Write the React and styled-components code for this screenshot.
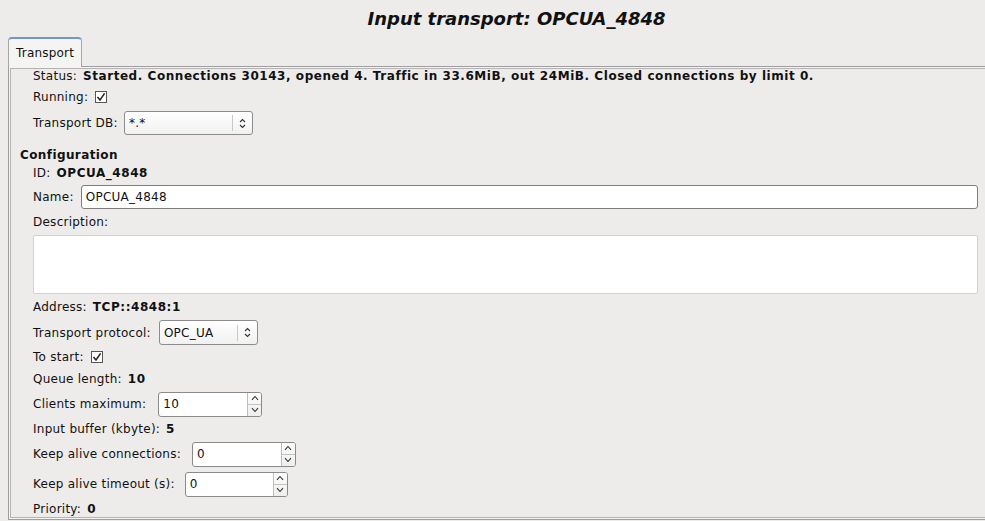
import React from "react";
import styled, { createGlobalStyle } from "styled-components";

const Global = createGlobalStyle`
  html, body { margin: 0; padding: 0; background: #edeceb; overflow: hidden; }
  body { font-family: "DejaVu Sans", "Liberation Sans", sans-serif; font-size: 12px; color: #111; letter-spacing: 0.25px; }
`;

const Window = styled.div`
  width: 1033px;
  height: 521px;
  display: flex;
  flex-direction: column;
`;

const Title = styled.h1`
  margin: 0;
  height: 37px;
  flex-shrink: 0;
  display: flex;
  align-items: center;
  justify-content: center;
  font-size: 18px;
  font-weight: bold;
  font-style: italic;
  letter-spacing: 0;
  color: #111;
`;

const TabBar = styled.div`
  display: flex;
  flex-shrink: 0;
  padding-left: 8px;
  height: 29px;
`;

const Tab = styled.div`
  width: 74px;
  box-sizing: border-box;
  border: 1px solid #a6a6a6;
  border-top: 2px solid #6e98cf;
  border-bottom: none;
  border-radius: 4px 4px 0 0;
  background: #f4f4f2;
  display: flex;
  align-items: center;
  padding-left: 7px;
  font-size: 12px;
  letter-spacing: 0.2px;
  color: #111;
  position: relative;
  z-index: 1;
  margin-bottom: -1px;
`;

const Panel = styled.div`
  margin-left: 8px;
  width: 1017px;
  height: 454px;
  flex-shrink: 0;
  box-sizing: border-box;
  border: 1px solid #9e9e9e;
  box-shadow: inset 0 0 0 1px #f4f4f2, inset 0 0 0 2px #b4b4b4;
  padding: 0 46px 0 11px;
  display: flex;
  flex-direction: column;
  overflow: hidden;
`;

const Row = styled.div`
  display: flex;
  flex-shrink: 0;
  align-items: center;
  height: ${(p) => p.$h || 20}px;
  margin-top: ${(p) => p.$mt || 0}px;
  padding-left: ${(p) => (p.$section ? 0 : 13)}px;
  white-space: nowrap;
`;

const Label = styled.span`
  margin-right: ${(p) => p.$gap || 6}px;
`;

const Value = styled.b`
  font-weight: bold;
  letter-spacing: 0.55px;
`;

const SectionTitle = styled.b`
  font-weight: bold;
  letter-spacing: 0.4px;
`;

const CheckBox = styled.span`
  width: 12px;
  height: 12px;
  box-sizing: border-box;
  border: 1px solid #555;
  background: #fff;
  display: inline-flex;
  align-items: center;
  justify-content: center;
  margin-left: 1px;
`;

const Combo = styled.div`
  width: ${(p) => p.$w}px;
  height: ${(p) => p.$h || 24}px;
  box-sizing: border-box;
  border: 1px solid #8c8c8c;
  border-radius: 3px;
  background: linear-gradient(#ffffff, #f1f1f0);
  display: flex;
  align-items: center;
`;

const ComboText = styled.span`
  flex: 1;
  padding-left: 4px;
`;

const ComboArrow = styled.span`
  width: 19px;
  height: 16px;
  border-left: 1px solid #c8c8c8;
  display: flex;
  align-items: center;
  justify-content: center;
`;

const TextInput = styled.div`
  flex: 1;
  height: 24px;
  box-sizing: border-box;
  border: 1px solid #7e7e7e;
  border-radius: 3px;
  background: #fff;
  display: flex;
  align-items: center;
  padding-left: 4px;
`;

const TextArea = styled.div`
  margin-left: 13px;
  height: 59px;
  flex-shrink: 0;
  box-sizing: border-box;
  border: 1px solid #d2d2d2;
  border-radius: 2px;
  background: #fff;
`;

const Spin = styled.div`
  width: ${(p) => p.$w}px;
  height: 25px;
  box-sizing: border-box;
  border: 1px solid #8a8a8a;
  border-radius: 3px;
  background: #fff;
  display: flex;
`;

const SpinText = styled.span`
  flex: 1;
  display: flex;
  align-items: center;
  padding-left: 4px;
`;

const SpinButtons = styled.div`
  width: 13px;
  border-left: 1px solid #bdbdbd;
  display: flex;
  flex-direction: column;
  background: linear-gradient(#fdfdfd, #eeeeed);
  border-radius: 0 2px 2px 0;
`;

const SpinBtn = styled.span`
  flex: 1;
  display: flex;
  align-items: center;
  justify-content: center;
  & + & { border-top: 1px solid #c4c4c4; }
`;

const Check = () => (
  <CheckBox>
    <svg width="10" height="10" viewBox="0 0 10 10">
      <path d="M1.5 5 L4 8 L8.6 1.4" fill="none" stroke="#222" strokeWidth="1.5" />
    </svg>
  </CheckBox>
);

const UpDown = () => (
  <svg width="7" height="11" viewBox="0 0 7 11">
    <path d="M1 4 L3.5 1.5 L6 4 M1 7 L3.5 9.5 L6 7" fill="none" stroke="#333" strokeWidth="1.1" />
  </svg>
);

const ComboBox = ({ w, h, text }) => (
  <Combo $w={w} $h={h}>
    <ComboText>{text}</ComboText>
    <ComboArrow>
      <UpDown />
    </ComboArrow>
  </Combo>
);

const SpinBox = ({ w, value }) => (
  <Spin $w={w}>
    <SpinText>{value}</SpinText>
    <SpinButtons>
      <SpinBtn>
        <svg width="8" height="6" viewBox="0 0 8 6">
          <path d="M1 4.8 L4 1.5 L7 4.8" fill="none" stroke="#333" strokeWidth="1.1" />
        </svg>
      </SpinBtn>
      <SpinBtn>
        <svg width="8" height="6" viewBox="0 0 8 6">
          <path d="M1 1.2 L4 4.5 L7 1.2" fill="none" stroke="#333" strokeWidth="1.1" />
        </svg>
      </SpinBtn>
    </SpinButtons>
  </Spin>
);

export default function App() {
  return (
    <>
      <Global />
      <Window>
        <Title>Input transport: OPCUA_4848</Title>
        <TabBar>
          <Tab>Transport</Tab>
        </TabBar>
        <Panel>
          <Row $h={18}>
            <Label>Status:</Label>
            <Value>Started. Connections 30143, opened 4. Traffic in 33.6MiB, out 24MiB. Closed connections by limit 0.</Value>
          </Row>
          <Row $h={24}>
            <Label>Running:</Label>
            <Check />
          </Row>
          <Row $h={28}>
            <Label>Transport DB:</Label>
            <ComboBox w={129} text="*.*" />
          </Row>
          <Row $h={18} $section $mt={9}>
            <SectionTitle>Configuration</SectionTitle>
          </Row>
          <Row $h={17}>
            <Label>ID:</Label>
            <Value>OPCUA_4848</Value>
          </Row>
          <Row $h={24} $mt={4}>
            <Label $gap={7}>Name:</Label>
            <TextInput>OPCUA_4848</TextInput>
          </Row>
          <Row $h={26}>
            <Label>Description:</Label>
          </Row>
          <TextArea />
          <Row $h={22} $mt={2}>
            <Label>Address:</Label>
            <Value>TCP::4848:1</Value>
          </Row>
          <Row $h={25} $mt={2}>
            <Label $gap={8}>Transport protocol:</Label>
            <ComboBox w={99} h={25} text="OPC_UA" />
          </Row>
          <Row $h={24}>
            <Label>To start:</Label>
            <Check />
          </Row>
          <Row $h={20}>
            <Label>Queue length:</Label>
            <Value>10</Value>
          </Row>
          <Row $h={24} $mt={3}>
            <Label $gap={12}>Clients maximum:</Label>
            <SpinBox w={104} value="10" />
          </Row>
          <Row $h={26}>
            <Label>Input buffer (kbyte):</Label>
            <Value>5</Value>
          </Row>
          <Row $h={24}>
            <Label $gap={11}>Keep alive connections:</Label>
            <SpinBox w={104} value="0" />
          </Row>
          <Row $h={24} $mt={6}>
            <Label $gap={10}>Keep alive timeout (s):</Label>
            <SpinBox w={103} value="0" />
          </Row>
          <Row $h={26}>
            <Label>Priority:</Label>
            <Value>0</Value>
          </Row>
        </Panel>
      </Window>
    </>
  );
}
